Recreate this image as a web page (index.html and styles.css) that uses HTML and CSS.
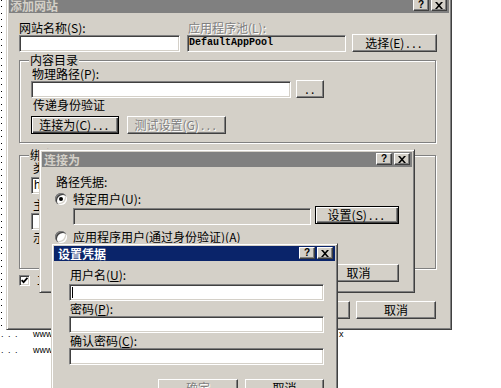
FILE: index.html
```html
<!DOCTYPE html>
<html lang="zh-CN">
<head>
<meta charset="utf-8">
<title>添加网站</title>
<link rel="stylesheet" href="styles.css">
</head>
<body>
<div class="desktop">
  <div class="tree"></div>
  <div class="row"><span class="dots">. . .</span><span class="url">www.</span><span class="tail">x</span></div>
  <div class="row"><span class="dots">. . .</span><span class="url">www.</span></div>
</div>

<div class="win win-main">
  <div class="titlebar">
    <span class="ttl">添加网站</span>
    <span class="tbtn">?</span>
    <span class="tbtn"><svg width="8" height="7" viewBox="0 0 8 7"><path d="M0 0h2l2 2.3L6 0h2L5 3.5 8 7H6L4 4.7 2 7H0l3-3.5z" fill="#000"/></svg></span>
  </div>
  <div class="pane main-pane">
    <div class="lbl-row">
      <span class="lbl site-lbl">网站名称(S):</span>
      <span class="lbl dis pool-lbl">应用程序池(L):</span>
    </div>
    <div class="field-row">
      <div class="input site-in"></div>
      <div class="input ro pool-in">DefaultAppPool</div>
      <div class="btn pick-btn">选择(E)<span class="ell">...</span></div>
    </div>
    <div class="group content-grp">
      <div class="legend">内容目录</div>
      <div class="lbl path-lbl">物理路径(P):</div>
      <div class="path-row">
        <div class="input path-in"></div>
        <div class="btn browse-btn"><span class="ell">..</span></div>
      </div>
      <div class="lbl pass-lbl">传递身份验证</div>
      <div class="btn-row grp-btns">
        <div class="btn def conn-btn">连接为(C)<span class="ell">...</span></div>
        <div class="btn dis test-btn">测试设置(G)<span class="ell">...</span></div>
      </div>
    </div>
    <div class="group bind-grp">
      <div class="legend">绑定</div>
      <div class="lbl b-lbl t-lbl">类型(T):</div>
      <div class="input combo">http</div>
      <div class="lbl b-lbl h-lbl">主机名(H):</div>
      <div class="input host-in"></div>
      <div class="lbl b-lbl ex-lbl">示例: www.contoso.com 或 marketing.contoso.com</div>
    </div>
    <div class="check-row">
      <span class="check"><svg width="7" height="7" viewBox="0 0 7 7"><path d="M0.6 3.2l2 2 3.9-4.4" stroke="#000" stroke-width="1.8" fill="none"/></svg></span>
      <span class="lbl check-lbl">立即启动网站(M)</span>
    </div>
    <div class="btn-row right main-btns">
      <div class="btn w80">确定</div>
      <div class="btn w80">取消</div>
    </div>
  </div>
</div>

<div class="win win-conn">
  <div class="titlebar">
    <span class="ttl">连接为</span>
    <span class="tbtn">?</span>
    <span class="tbtn"><svg width="8" height="7" viewBox="0 0 8 7"><path d="M0 0h2l2 2.3L6 0h2L5 3.5 8 7H6L4 4.7 2 7H0l3-3.5z" fill="#000"/></svg></span>
  </div>
  <div class="pane conn-pane">
    <div class="lbl cred-lbl">路径凭据:</div>
    <div class="radio-row r1"><span class="radio on"></span><span class="lbl">特定用户(U):</span></div>
    <div class="user-row">
      <div class="input ro user-in"></div>
      <div class="btn def set-btn">设置(S)<span class="ell">...</span></div>
    </div>
    <div class="radio-row r2"><span class="radio"></span><span class="lbl">应用程序用户(通过身份验证)(A)</span></div>
    <div class="btn-row right conn-btns">
      <div class="btn w81">确定</div>
      <div class="btn w81">取消</div>
    </div>
  </div>
</div>

<div class="win win-cred active">
  <div class="titlebar">
    <span class="ttl">设置凭据</span>
    <span class="tbtn">?</span>
    <span class="tbtn"><svg width="8" height="7" viewBox="0 0 8 7"><path d="M0 0h2l2 2.3L6 0h2L5 3.5 8 7H6L4 4.7 2 7H0l3-3.5z" fill="#000"/></svg></span>
  </div>
  <div class="pane cred-pane">
    <div class="lbl c-lbl first">用户名(<u>U</u>):</div>
    <div class="input c-in first-in"><span class="caret"></span></div>
    <div class="lbl c-lbl">密码(<u>P</u>):</div>
    <div class="input c-in"></div>
    <div class="lbl c-lbl">确认密码(<u>C</u>):</div>
    <div class="input c-in"></div>
    <div class="btn-row right cred-btns">
      <div class="btn dis w80">确定</div>
      <div class="btn w79">取消</div>
    </div>
  </div>
</div>
</body>
</html>
```

FILE: styles.css
```css
* { box-sizing: border-box; }
html, body { margin: 0; padding: 0; }
body {
  width: 501px;
  height: 388px;
  overflow: hidden;
  position: relative;
  background: #fff;
  font-family: "Noto Sans CJK SC", "Liberation Sans", sans-serif;
  font-size: 12px;
  line-height: 12px;
  color: #000;
}

/* background list behind the dialogs */
.desktop { display: flex; flex-direction: column; }
.tree {
  width: 1px;
  height: 328px;
  margin-left: 1px;
  background: repeating-linear-gradient(to bottom, #000 0 1px, transparent 1px 6.5px);
}
.row { display: flex; height: 16px; font: 9px/13px "Liberation Sans", sans-serif; color: #000; }
.row .dots { width: 33px; letter-spacing: 1px; padding-left: 1px; }
.row .url { width: 20px; }
.row .tail { margin-left: 286px; }

/* windows */
.win {
  position: absolute;
  display: flex;
  flex-direction: column;
  background: #d4d0c8;
  border: 1px solid;
  border-color: #d4d0c8 #404040 #404040 #d4d0c8;
  box-shadow: inset 1px 1px #fff, inset -1px -1px #808080;
  padding: 2px;
}
.win-main { left: 6px; top: -5px; width: 446px; height: 335px; }
.win-conn { left: 39px; top: 149px; width: 376px; height: 144px; }
.win-cred { left: 51px; top: 243px; width: 287px; height: 160px; }

.titlebar {
  flex: none;
  height: 15px;
  display: flex;
  align-items: flex-start;
  background: #808080;
  color: #d4d0c8;
  font-weight: 700;
  padding: 0 2px 0 2px;
}
.active .titlebar { background: #0a246a; color: #fff; }
.ttl { flex: 1; line-height: 15px; white-space: nowrap; }
.win-main .ttl { margin-left: -1px; }
.win-cred .ttl { padding-left: 2px; }
.tbtn {
  flex: none;
  width: 16px;
  height: 12px;
  margin-top: 1px;
  display: flex;
  align-items: center;
  justify-content: center;
  background: #d4d0c8;
  border: 1px solid;
  border-color: #fff #404040 #404040 #fff;
  box-shadow: inset -1px -1px #808080;
  color: #000;
  font: bold 10px/10px "Liberation Sans", sans-serif;
}
.tbtn + .tbtn { margin-left: 2px; }

/* common controls */
.pane { display: flex; flex-direction: column; align-items: flex-start; }
.lbl { height: 12px; line-height: 12px; white-space: nowrap; }
.dis { color: #808080; text-shadow: 1px 1px #fff; }
.input {
  flex: none;
  height: 17px;
  background: #fff;
  border: 1px solid;
  border-color: #808080 #fff #fff #808080;
  box-shadow: inset 1px 1px #404040, inset -1px -1px #d4d0c8;
  padding: 0 2px;
  line-height: 15px;
  white-space: nowrap;
  overflow: hidden;
}
.input.ro { background: #d4d0c8; }
.btn {
  flex: none;
  height: 18px;
  display: flex;
  align-items: center;
  justify-content: center;
  background: #d4d0c8;
  border: 1px solid;
  border-color: #fff #404040 #404040 #fff;
  box-shadow: inset -1px -1px #808080;
  white-space: nowrap;
  line-height: 12px;
}
.btn.def {
  border-color: #000;
  box-shadow: inset 1px 1px #fff, inset -1px -1px #404040, inset -2px -2px #808080;
}
.ell { letter-spacing: 2.5px; margin-left: 2px; }
.btn-row { display: flex; }
.btn-row.right { align-self: stretch; justify-content: flex-end; }
.w79 { width: 79px; }
.w80 { width: 80px; }
.w81 { width: 81px; }

/* main dialog */
.main-pane { padding: 9px 13px 0 10px; }
.lbl-row { display: flex; height: 12px; }
.site-lbl { width: 168px; }
.pool-lbl { margin-left: 1px; }
.field-row { display: flex; align-items: flex-end; height: 18px; }
.site-in { width: 161px; }
.pool-in { width: 159px; margin-left: 7px; font: bold 10px/14px "Liberation Mono", monospace; padding-left: 1px; }
.pick-btn { width: 85px; margin-left: 6px; }

.group {
  display: flex;
  flex-direction: column;
  align-items: flex-start;
  width: 417px;
  border: 1px solid #808080;
  box-shadow: inset 1px 1px #fff, 1px 1px #fff;
  padding-left: 11px;
}
.legend {
  height: 12px;
  line-height: 12px;
  margin: -7px 0 0 -2px;
  padding: 0 1px;
  background: #d4d0c8;
}
.content-grp { margin-top: 8px; padding-bottom: 8px; }
.path-lbl { margin: 2px 0 0 1px; }
.path-row { display: flex; align-items: flex-end; }
.path-in { width: 260px; }
.browse-btn { width: 28px; margin-left: 5px; }
.pass-lbl { margin: 1px 0 0 2px; }
.grp-btns { margin-top: 5px; }
.conn-btn { width: 88px; }
.test-btn { width: 99px; margin-left: 8px; }

.bind-grp { margin-top: 12px; height: 114px; }
.b-lbl { margin-left: 2px; }
.t-lbl { margin-top: 1px; }
.combo { margin-top: 3px; width: 120px; font-family: "Liberation Sans", sans-serif; }
.h-lbl { margin-top: 5px; }
.host-in { margin-top: 2px; width: 300px; }
.ex-lbl { margin-top: 2px; }

.check-row { display: flex; align-items: center; height: 12px; margin-top: 5px; }
.check {
  width: 11px;
  height: 11px;
  display: flex;
  align-items: center;
  justify-content: center;
  background: #fff;
  border: 1px solid;
  border-color: #808080 #fff #fff #808080;
  box-shadow: inset 1px 1px #404040, inset -1px -1px #d4d0c8;
}
.check-lbl { margin-left: 7px; }
.main-btns { margin-top: 15px; gap: 6px; }

/* connect-as dialog */
.conn-pane { padding: 9px 13px 0 13px; }
.cred-lbl { margin-left: 1px; }
.radio-row { display: flex; align-items: center; height: 12px; }
.radio-row .lbl { margin-left: 6px; }
.r1 { margin-top: 5px; }
.r2 { margin-top: 6px; }
.radio {
  position: relative;
  width: 12px;
  height: 12px;
  border-radius: 50%;
  background: #fff;
  box-shadow: inset 1px 1px #808080, inset 2px 2px #404040, inset -1px -1px #fff, inset -2px -2px #d4d0c8;
}
.radio.on::after {
  content: "";
  position: absolute;
  left: 4px;
  top: 4px;
  width: 4px;
  height: 4px;
  border-radius: 50%;
  background: #000;
}
.user-row { display: flex; align-items: flex-start; margin-top: 1px; }
.user-in { width: 238px; margin: 2px 0 0 18px; }
.set-btn { width: 84px; margin-left: 4px; }
.conn-btns { margin-top: 21px; gap: 6px; }

/* credentials dialog */
.cred-pane { padding: 8px 11px 0 15px; }
.c-lbl { margin: 2px 0 0 1px; }
.c-lbl.first { margin-top: 0; }
.c-in { width: 255px; margin-top: 1px; }
.c-in.first-in { margin-top: 3px; }
.caret { display: block; width: 1px; height: 11px; margin-top: 2px; background: #000; }
.cred-btns { margin-top: 14px; gap: 7px; }
```
